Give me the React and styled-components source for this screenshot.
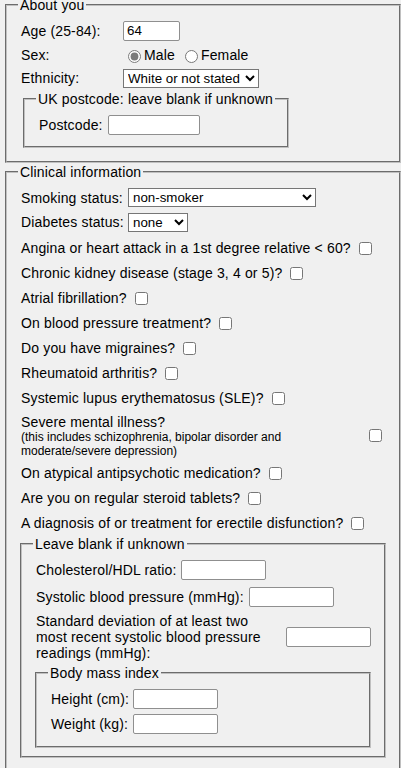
import React from 'react';
import styled, { createGlobalStyle } from 'styled-components';

const GlobalStyle = createGlobalStyle`
  html, body {
    margin: 0;
    padding: 0;
    background: #f0f0f0;
  }
  body {
    font-family: "Liberation Sans", Arial, sans-serif;
    font-size: 14px;
    letter-spacing: 0.15px;
    color: #000;
  }
`;

const Page = styled.form`
  width: 396px;
  margin-left: 5px;
  padding-bottom: 30px;
`;

const Fieldset = styled.fieldset`
  margin: ${p => p.$margin || '0'};
  padding: ${p => p.$padding || '6px 13px 13px 11px'};
  width: ${p => p.$width || 'auto'};
  border: 2px groove #c0c0c0;
  min-width: 0;
  box-sizing: border-box;
`;

const Legend = styled.legend`
  padding: 0 2px;
  white-space: nowrap;
`;

// label / control pairs laid out in a two column grid
const GridRow = styled.div`
  display: grid;
  grid-template-columns: ${p => p.$col || '102px'} auto;
  align-items: center;
  height: ${p => p.$h || 24}px;
  margin-top: ${p => p.$mt || 0}px;
  padding-left: 3px;
`;

const InlineRow = styled.div`
  display: flex;
  align-items: center;
  gap: ${p => p.$gap || 6}px;
  height: ${p => (p.$h ? `${p.$h}px` : 'auto')};
  margin-top: ${p => p.$mt || 0}px;
  padding-left: 3px;
`;

const CheckRow = styled.div`
  display: flex;
  align-items: center;
  height: ${p => p.$h || 25}px;
  padding-left: 3px;
`;

const TextInput = styled.input.attrs({ type: 'text' })`
  box-sizing: border-box;
  width: ${p => p.$w || 85}px;
  height: 20px;
  margin: 0;
  padding: 1px 3px;
  border: 1px solid #8f8f8f;
  border-radius: 2px;
  background: #fff;
  font-family: "Liberation Sans", Arial, sans-serif;
  font-size: 13.333px;
  color: #000;
  margin-left: ${p => p.$ml || 0}px;
`;

const Select = styled.select`
  box-sizing: border-box;
  width: ${p => p.$w}px;
  height: 19px;
  margin: 0;
  font-family: "Liberation Sans", Arial, sans-serif;
  font-size: 13.333px;
  color: #000;
  background: #fff;
`;

const Check = styled.input.attrs({ type: 'checkbox' })`
  width: 13px;
  height: 13px;
  margin: 3px ${p => (p.$end ? 4 : 3)}px 3px ${p => (p.$end ? 'auto' : '8px')};
  flex: none;
`;

const RadioGroup = styled.div`
  display: flex;
  align-items: center;
  gap: 5px;
`;

const RadioLabel = styled.label`
  display: inline-flex;
  align-items: center;
`;

const Radio = styled.input.attrs({ type: 'radio' })`
  width: 13px;
  height: 13px;
  margin: 3px 3px 0 5px;
  accent-color: #7b7b7b;
`;

const SevereText = styled.div`
  width: 300px;
  line-height: 16px;
`;

const Note = styled.span`
  display: block;
  font-size: 12px;
  line-height: 14px;
  letter-spacing: 0;
`;

const WrapLabel = styled.span`
  width: 240px;
  line-height: 16px;
`;

const checks = [
  'Angina or heart attack in a 1st degree relative < 60?',
  'Chronic kidney disease (stage 3, 4 or 5)?',
  'Atrial fibrillation?',
  'On blood pressure treatment?',
  'Do you have migraines?',
  'Rheumatoid arthritis?',
  'Systemic lupus erythematosus (SLE)?',
];

const laterChecks = [
  'On atypical antipsychotic medication?',
  'Are you on regular steroid tablets?',
  'A diagnosis of or treatment for erectile disfunction?',
];

export default function App() {
  return (
    <>
      <GlobalStyle />
      <Page onSubmit={e => e.preventDefault()}>
        <Fieldset $margin="-3px 0 0 0">
          <Legend>About you</Legend>
          <GridRow $h={23}>
            <span>Age (25-84):</span>
            <TextInput $w={57} defaultValue="64" />
          </GridRow>
          <GridRow $h={25}>
            <span>Sex:</span>
            <RadioGroup>
              <RadioLabel>
                <Radio name="sex" defaultChecked />
                Male
              </RadioLabel>
              <RadioLabel>
                <Radio name="sex" />
                Female
              </RadioLabel>
            </RadioGroup>
          </GridRow>
          <GridRow $h={22}>
            <span>Ethnicity:</span>
            <Select $w={136} defaultValue="white">
              <option value="white">White or not stated</option>
              <option value="indian">Indian</option>
              <option value="pakistani">Pakistani</option>
              <option value="bangladeshi">Bangladeshi</option>
              <option value="asian">Other Asian</option>
              <option value="caribbean">Black Caribbean</option>
              <option value="african">Black African</option>
              <option value="chinese">Chinese</option>
              <option value="other">Other ethnic group</option>
            </Select>
          </GridRow>
          <Fieldset $margin="2px 0 0 5px" $width="266px" $padding="6px 2px 9px 11px">
            <Legend>UK postcode: leave blank if unknown</Legend>
            <InlineRow $h={24} $gap={5}>
              <span>Postcode:</span>
              <TextInput $w={92} />
            </InlineRow>
          </Fieldset>
        </Fieldset>

        <Fieldset $margin="1px 0 0 0" $padding="6px 13px 12px 11px">
          <Legend>Clinical information</Legend>
          <GridRow $h={23} $col="107px">
            <span>Smoking status:</span>
            <Select $w={188} defaultValue="non">
              <option value="non">non-smoker</option>
              <option value="ex">ex-smoker</option>
              <option value="light">light smoker (less than 10)</option>
              <option value="moderate">moderate smoker (10 to 19)</option>
              <option value="heavy">heavy smoker (20 or over)</option>
            </Select>
          </GridRow>
          <GridRow $h={26.5} $col="107px">
            <span>Diabetes status:</span>
            <Select $w={60} defaultValue="none">
              <option value="none">none</option>
              <option value="t1">type 1</option>
              <option value="t2">type 2</option>
            </Select>
          </GridRow>
          {checks.map(text => (
            <CheckRow key={text}>
              <span>{text}</span>
              <Check />
            </CheckRow>
          ))}
          <CheckRow $h={50}>
            <SevereText>
              Severe mental illness?
              <Note>(this includes schizophrenia, bipolar disorder and moderate/severe depression)</Note>
            </SevereText>
            <Check $end />
          </CheckRow>
          {laterChecks.map(text => (
            <CheckRow key={text}>
              <span>{text}</span>
              <Check />
            </CheckRow>
          ))}

          <Fieldset $margin="0.5px 0 0 2px" $padding="5.5px 13px 8.5px 11px">
            <Legend>Leave blank if unknown</Legend>
            <InlineRow $h={24} $gap={4.5}>
              <span>Cholesterol/HDL ratio:</span>
              <TextInput />
            </InlineRow>
            <InlineRow $h={24} $gap={5} $mt={3}>
              <span>Systolic blood pressure (mmHg):</span>
              <TextInput />
            </InlineRow>
            <InlineRow $gap={0} $mt={4.5}>
              <WrapLabel>
                Standard deviation of at least two most recent systolic blood pressure readings (mmHg):
              </WrapLabel>
              <TextInput $ml={8 - 2} />
            </InlineRow>
            <Fieldset $margin="4px 0 0 2px" $padding="5.5px 13px 10px 11px">
              <Legend>Body mass index</Legend>
              <GridRow $h={24} $col="82px">
                <span>Height (cm):</span>
                <TextInput />
              </GridRow>
              <GridRow $h={24} $col="82px" $mt={1}>
                <span>Weight (kg):</span>
                <TextInput />
              </GridRow>
            </Fieldset>
          </Fieldset>
        </Fieldset>
      </Page>
    </>
  );
}
